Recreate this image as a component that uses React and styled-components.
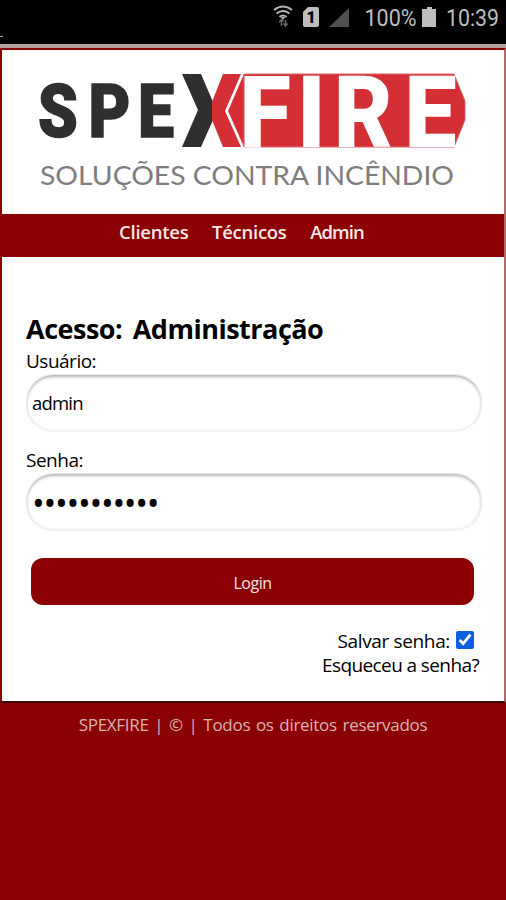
import styled, { createGlobalStyle } from 'styled-components'
import { useState } from 'react'

const GlobalStyle = createGlobalStyle`
  * {
    box-sizing: border-box;
  }
  body {
    margin: 0;
    background: #8b0000;
    font-family: 'Trebuchet MS', 'Open Sans', 'Noto Sans', sans-serif;
    color: #000;
  }
`

const Screen = styled.div`
  display: flex;
  flex-direction: column;
  height: 900px;
  overflow: hidden;
`

const StatusBar = styled.div`
  flex: none;
  height: 48px;
  background: #000;
  border-bottom: 4px solid #b0a09c;
  svg {
    display: block;
  }
`

const Page = styled.div`
  flex: none;
  height: 655px;
  background: #fff;
  border: 2px solid #8b0000;
  border-right-color: #b06a6a;
  border-bottom-color: #3a0000;
`

const Header = styled.header`
  height: 164px;
  svg {
    display: block;
  }
`

const Nav = styled.nav`
  height: 43px;
  background: #8b0000;
  display: flex;
  gap: 23.5px;
  padding: 5px 0 0 117px;
`

const NavLink = styled.a`
  color: #f8e8e8;
  font-size: 18.5px;
  line-height: 26px;
  font-weight: 600;
  letter-spacing: ${({ $spacing }) => $spacing || '-0.25px'};
`

const Form = styled.form`
  padding: 56px 22px 0 24px;
`

const Title = styled.h1`
  margin: 0 0 3px;
  font-size: 27px;
  line-height: 32px;
  font-weight: 700;
  letter-spacing: -0.5px;
  word-spacing: 4px;
  white-space: nowrap;
`

const Label = styled.label`
  display: block;
  font-size: 19px;
  line-height: 26px;
  font-weight: 500;
  letter-spacing: -0.5px;
`

const Input = styled.input`
  display: block;
  width: 456px;
  height: 58px;
  margin-bottom: 15px;
  padding: 0 5px 2px;
  border: 1px solid #e9e9e9;
  border-bottom-color: #f3f3f3;
  border-radius: 27px;
  box-shadow: inset 0 3px 3px -1px #b8b8b8, inset 0 0 2px 1px #ececec;
  background: #fff;
  font-family: inherit;
  font-weight: 500;
  font-size: 18.5px;
  letter-spacing: -0.8px;
  outline: none;
  &[type='password'] {
    padding: 2px 5px 0;
    font-size: 34px;
    letter-spacing: -1.3px;
  }
`

const Button = styled.button`
  display: block;
  width: 443px;
  height: 47px;
  margin: 27px 0 0 5px;
  padding: 3px 0 0;
  border: 0;
  border-radius: 12px;
  background: #8b0000;
  color: #f3e3e3;
  font-family: inherit;
  font-size: 16px;
  letter-spacing: -0.5px;
`

const Options = styled.div`
  display: flex;
  flex-direction: column;
  align-items: flex-end;
  margin-top: 24px;
  padding-right: 3px;
  font-size: 19px;
  line-height: 24px;
  font-weight: 500;
  letter-spacing: -0.6px;
`

const SaveRow = styled.label`
  display: flex;
  align-items: center;
  gap: 6px;
  padding-right: 5px;
  letter-spacing: -0.35px;
`

const Checkbox = styled.input`
  width: 18px;
  height: 18px;
  margin: 0 0 2px;
  accent-color: #0b5fe0;
`

const Footer = styled.footer`
  padding-top: 10px;
  text-align: center;
  color: #d9b3b3;
  font-size: 17px;
  line-height: 24px;
  letter-spacing: -0.3px;
  word-spacing: 1.6px;
  white-space: pre;
`

function StatusIcons() {
  return (
    <svg width="506" height="44" fill="#bebebe">
      <path d="M0 36.5h3" stroke="#aaa" />
      <g fill="none" stroke="#b4b4b4" strokeWidth="2">
        <path d="M274 10q9-7 18 0M276.500 13.500q6.500-5 13 0M279.500 17q3.500-3 7 0" />
      </g>
      <path d="M281 17h4l-2 3z" />
      <path d="M281.500 19v7M279 22.500l2.500-3 2 2M285.500 26v-6M283.500 23.500l2 2.500 2-2.500" fill="none" stroke="#666" strokeWidth="1.500" />
      <path d="M308 7h9q2 0 2 2v16q0 2-2 2h-12q-2 0-2-2V12z" />
      <text x="306.500" y="23" fontFamily="Roboto" fontSize="16" fontWeight="900" fill="#000">1</text>
      <path d="M349 8v19h-20z" fill="#505050" />
      <text x="364.500" y="26" fontFamily="Roboto" fontSize="24" textLength="52" lengthAdjust="spacingAndGlyphs">100%</text>
      <path d="M427 7h5v2h4v18h-14V9h5z" />
      <text x="446" y="26" fontFamily="Roboto" fontSize="24" textLength="53" lengthAdjust="spacingAndGlyphs">10:39</text>
    </svg>
  )
}

function Logo() {
  return (
    <svg width="502" height="164" viewBox="2 50 502 164">
      <g fontFamily="Roboto" fontWeight="900" fontSize="74" fill="#302e2f" stroke="#302e2f" strokeWidth="1.500">
        <text transform="translate(38 137) scale(.86 1)">S</text>
        <text transform="translate(88.500 137) scale(.87 1)">P</text>
        <text transform="translate(138 137) scale(.87 1)">E</text>
      </g>
      <path d="M182 74h19l12 28v18l-12 27h-19l16-37z" fill="#302e2f" />
      <path d="M223 74h18l-16 37 16 36h-18l-11-27v-18z" fill="#d32f35" />
      <path d="M244 74v73l-16-36z" fill="#d32f35" />
      <path d="M244 74h210l11 27v19l-11 27H244z" fill="#d32f35" stroke="#d9646a" />
      <g fontFamily="Roboto" fontWeight="900" fontSize="100" fill="#fff">
        <text transform="translate(239.500 146.500) scale(.94 1)">F</text>
        <text transform="translate(297 146.500) scale(.95 1)">I</text>
        <text transform="translate(334 146.500) scale(.9 1)">R</text>
        <text transform="translate(404.500 146.500) scale(.93 1)">E</text>
      </g>
      <text x="40" y="184.500" fontFamily="Lato" fontSize="26.500" fill="#7d7d7d" textLength="414" lengthAdjust="spacingAndGlyphs">SOLUÇÕES CONTRA INCÊNDIO</text>
    </svg>
  )
}

function App() {
  const [user, setUser] = useState('admin')
  const [password, setPassword] = useState('12345678901')
  const [save, setSave] = useState(true)

  return (
    <Screen>
      <GlobalStyle />
      <StatusBar>
        <StatusIcons />
      </StatusBar>
      <Page>
        <Header>
          <Logo />
        </Header>
        <Nav>
          <NavLink>Clientes</NavLink>
          <NavLink>Técnicos</NavLink>
          <NavLink $spacing="-0.9px">Admin</NavLink>
        </Nav>
        <Form>
          <Title>Acesso: Administração</Title>
          <Label>Usuário:</Label>
          <Input value={user} onChange={(e) => setUser(e.target.value)} />
          <Label>Senha:</Label>
          <Input
            type="password"
            value={password}
            onChange={(e) => setPassword(e.target.value)}
          />
          <Button type="button">Login</Button>
          <Options>
            <SaveRow>
              Salvar senha:
              <Checkbox
                type="checkbox"
                checked={save}
                onChange={(e) => setSave(e.target.checked)}
              />
            </SaveRow>
            <a>Esqueceu a senha?</a>
          </Options>
        </Form>
      </Page>
      <Footer>SPEXFIRE | © | Todos os direitos reservados</Footer>
    </Screen>
  )
}

export default App
